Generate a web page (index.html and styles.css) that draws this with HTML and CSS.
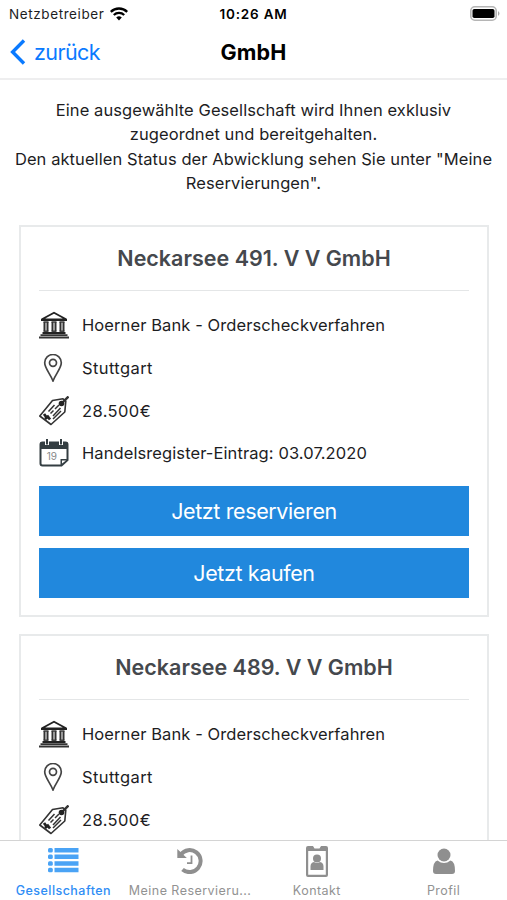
FILE: index.html
```html
<!DOCTYPE html>
<html lang="de">
<head>
  <meta charset="UTF-8" />
  <title>GmbH</title>
  <link rel="stylesheet" href="styles.css">
</head>
<body>
  <!-- shared icons -->
  <svg class="sprite" width="0" height="0">
    <symbol id="icon-bank" viewBox="0 0 30 28">
      <path d="M2.5 8.5 15 1.8l12.5 6.7z" fill="#fff" stroke="#222" stroke-width="1.8" />
      <path d="M2 9h26M3.5 22h23" stroke="#222" stroke-width="1.8" />
      <path d="M1.5 24.2h27M0 26.5h30" stroke="#333" stroke-width="1.8" />
      <path d="M4.5 11h5M12.500 11h5M20.500 11h5M4.500 20.200h5M12.500 20.200h5M20.500 20.200h5" stroke="#444" stroke-width="1.4" />
      <path d="M5.500 11v9M8.500 11v9M13.500 11v9M16.500 11v9M21.500 11v9M24.500 11v9" stroke="#333" stroke-width="2" />
    </symbol>
    <symbol id="icon-pin" viewBox="0 0 30 28">
      <path d="M14 27C11.5 20 5.7 14.3 5.7 8.8a8.3 8.3 0 0 1 16.6 0C22.300 14.300 16.500 20 14 27z" fill="none" stroke="#444" stroke-width="1.7" />
      <circle cx="14" cy="8.8" r="3.5" fill="none" stroke="#444" stroke-width="1.7" />
    </symbol>
    <symbol id="icon-tag" viewBox="0 0 30 30">
      <path d="M.8 20 13.500 4.500l10.500-1.700 2.800 2.300-1 10.900L12 28.500z" fill="#fff" stroke="#333" stroke-width="1.6" stroke-linejoin="round" />
      <path d="m22 8 7.500-7.500" stroke="#333" stroke-width="2.400" />
      <circle cx="22.500" cy="7.500" r="2.800" fill="#222" />
      <path d="m9.500 15.500 6-6.500M11.500 17.500l3-3M16 13l4-4M14 20l7.500-8M14 23l8-8" stroke="#333" stroke-width="1.500" />
      <path d="m5 18 3 4M8 19.500l3 4M6 23l4-3" stroke="#222" stroke-width="2.800" />
    </symbol>
    <symbol id="icon-calendar" viewBox="0 0 30 28">
      <path d="M1.500 5.500q0-2 2-2h23q2 0 2 2V21l-6 5.500h-19q-2 0-2-2z" fill="#fff" stroke="#343e42" stroke-width="2" />
      <path d="M1.500 3.500h27v6.500h-27zM21.500 27v-7h7z" fill="#343e42" />
      <path d="M23 24.500V21.500h4z" fill="#fff" />
      <path d="M8 0v6M22 0v6" stroke="#fff" stroke-width="4" />
      <path d="M8 0v5.500M22 0v5.500" stroke="#343e42" stroke-width="2" />
      <text x="12.800" y="20.500" text-anchor="middle" class="calendar-day">19</text>
    </symbol>
  </svg>

  <div class="app">
    <div class="status-bar">
      <div class="carrier">
        <span>Netzbetreiber</span>
        <svg width="18" height="14" viewBox="0 0 18 14" fill="none" stroke="#000" stroke-width="2.300">
          <path d="M.8 4.800a11.800 11.800 0 0 1 16.400 0" />
          <path d="M3.800 8a7.500 7.500 0 0 1 10.400 0" />
          <path d="m9 13.500-2.800-3a4 4 0 0 1 5.600 0z" fill="#000" stroke="none" />
        </svg>
      </div>
      <div class="clock">10:26 AM</div>
      <svg class="battery" width="31" height="15" viewBox="0 0 31 15">
        <rect x=".8" y=".8" width="25.400" height="13.400" rx="4" fill="#fff" stroke="#b5b5b5" stroke-width="1.600" />
        <rect x="2.500" y="3" width="22" height="9" rx="1.800" />
        <path d="M28 5q3 2.500 0 5z" fill="#aaa" />
      </svg>
    </div>

    <div class="nav-bar">
      <a class="back" href="#">
        <svg width="16" height="26" viewBox="0 0 16 26" fill="none" stroke="#0a7aff" stroke-width="3.400">
          <path d="M14 1.500 2.600 13 14 24.500" />
        </svg>
        <span>zurück</span>
      </a>
      <h1>GmbH</h1>
    </div>

    <div class="content">
      <p class="intro">
        Eine ausgewählte Gesellschaft wird Ihnen exklusiv<br>
        zugeordnet und bereitgehalten.<br>
        Den aktuellen Status der Abwicklung sehen Sie unter "Meine<br>
        Reservierungen".
      </p>

      <div class="card">
        <h2>Neckarsee 491. V V GmbH</h2>
        <ul class="details">
          <li><svg class="icon"><use href="#icon-bank" /></svg><span>Hoerner Bank - Orderscheckverfahren</span></li>
          <li><svg class="icon"><use href="#icon-pin" /></svg><span class="wide">Stuttgart</span></li>
          <li><svg class="icon tag"><use href="#icon-tag" /></svg><span class="wide">28.500€</span></li>
          <li><svg class="icon"><use href="#icon-calendar" /></svg><span>Handelsregister-Eintrag: 03.07.2020</span></li>
        </ul>
        <button>Jetzt reservieren</button>
        <button>Jetzt kaufen</button>
      </div>

      <div class="card">
        <h2>Neckarsee 489. V V GmbH</h2>
        <ul class="details">
          <li><svg class="icon"><use href="#icon-bank" /></svg><span>Hoerner Bank - Orderscheckverfahren</span></li>
          <li><svg class="icon"><use href="#icon-pin" /></svg><span class="wide">Stuttgart</span></li>
          <li><svg class="icon tag"><use href="#icon-tag" /></svg><span class="wide">28.500€</span></li>
        </ul>
      </div>
    </div>

    <div class="tab-bar">
      <a class="tab active" href="#">
        <svg width="32" height="28" viewBox="0 0 32 28" fill="#4aa3f5">
          <path d="M7.500 2h24v4.500h-24zM7.500 8.600h24v4.500h-24zM7.500 15.200h24v4.500h-24zM7.500 21.800h24v4.500h-24z" />
          <rect x="1" y="2" width="4.800" height="4.500" rx="1.500" />
          <rect x="1" y="8.600" width="4.800" height="4.500" rx="1.500" />
          <rect x="1" y="15.200" width="4.800" height="4.500" rx="1.500" />
          <rect x="1" y="21.800" width="4.800" height="4.500" rx="1.500" />
        </svg>
        <span>Gesellschaften</span>
      </a>
      <a class="tab" href="#">
        <svg width="28" height="28" viewBox="0 0 28 28" fill="none" stroke="#8f8f8f">
          <path d="M4.800 8.500A11 11 0 1 1 6.500 23.500" stroke-width="4" />
          <path d="M1.300 3v9h9.500z" fill="#8f8f8f" stroke="none" />
          <path d="M15.500 9.500v7.700H11" stroke-width="1.800" />
        </svg>
        <span>Meine Reservieru...</span>
      </a>
      <a class="tab" href="#">
        <svg width="24" height="32" viewBox="0 0 24 32" fill="#8f8f8f">
          <path fill-rule="evenodd" d="M3 0h5l1.500 2.500h5L16 0h5q2 0 2 2v27q0 2-2 2H3q-2 0-2-2V2q0-2 2-2zM3.200 5v23.800h17.600V5z" />
          <circle cx="12" cy="12.500" r="4" />
          <path d="M5.500 24v-3.500q0-4 3.500-4.500 3 2 6 0 3.500.5 3.500 4.500V24z" />
        </svg>
        <span>Kontakt</span>
      </a>
      <a class="tab" href="#">
        <svg width="24" height="28" viewBox="0 0 24 28" fill="#8f8f8f">
          <circle cx="12" cy="9" r="6.500" />
          <path d="M5.500 14.500q6.500 5 13 0Q23 15.500 23 25q0 3-3 3H4q-3 0-3-3 0-9.500 4.500-10.500z" />
        </svg>
        <span>Profil</span>
      </a>
    </div>
  </div>
</body>
</html>
```
FILE: styles.css
```css
* {
  box-sizing: border-box;
}

body {
  margin: 0;
  font-family: Inter, "Liberation Sans", sans-serif;
  background: #fff;
  color: #1d1d1f;
}

.sprite {
  display: none;
}

.app {
  display: flex;
  flex-direction: column;
  height: 900px;
  overflow: hidden;
}

.status-bar {
  display: grid;
  grid-template-columns: 1fr auto 1fr;
  align-items: center;
  height: 27px;
  padding: 0 6px 0 9px;
  flex-shrink: 0;
  font-size: 13.5px;
}

.carrier {
  display: flex;
  align-items: center;
  gap: 6px;
  letter-spacing: 0.6px;
}

.clock {
  font-weight: 600;
  color: #000;
  letter-spacing: 0.8px;
  margin-left: -3px;
}

.battery {
  justify-self: end;
}

.nav-bar {
  display: grid;
  grid-template-columns: 1fr auto 1fr;
  align-items: center;
  height: 53px;
  padding: 0 10px 2px;
  border-bottom: 2px solid #eeeeef;
  flex-shrink: 0;
}

.nav-bar h1 {
  margin: 0;
  font-size: 21.5px;
  font-weight: 700;
  letter-spacing: 0.2px;
  color: #000;
}

.back {
  display: flex;
  align-items: center;
  gap: 8px;
  color: #0a7aff;
  font-size: 21.5px;
  letter-spacing: -0.6px;
  text-decoration: none;
}

.content {
  flex: 1;
  min-height: 0;
  overflow: hidden;
  padding: 18px 18px 0 19px;
}

.intro {
  margin: 0 -10px 29px -11px;
  text-align: center;
  white-space: nowrap;
  font-size: 16.5px;
  line-height: 24.4px;
  letter-spacing: 0.08px;
}

.card {
  height: 392px;
  margin-bottom: 17px;
  padding: 0 18px;
  border: 2px solid #e8eaeb;
}

.card h2 {
  margin: 0;
  height: 64px;
  border-bottom: 1px solid #e4e6e7;
  text-align: center;
  font-size: 21.5px;
  font-weight: 600;
  line-height: 63px;
  color: #45484d;
}

.details {
  list-style: none;
  margin: 0;
  padding: 13px 0 11px;
}

.details li {
  display: flex;
  align-items: center;
  gap: 13px;
  height: 42.8px;
  font-size: 16.5px;
  letter-spacing: 0.09px;
}

.details .wide {
  letter-spacing: 0.4px;
}

.icon {
  width: 30px;
  height: 28px;
}

.icon.tag {
  height: 30px;
}

.calendar-day {
  font-size: 10px;
  letter-spacing: 0;
  fill: #888;
}

.card button {
  display: block;
  width: 100%;
  height: 50px;
  margin-bottom: 12px;
  border: none;
  background: #2188dd;
  color: #fff;
  font-family: inherit;
  font-size: 21.5px;
  letter-spacing: -0.38px;
}

.tab-bar {
  display: grid;
  grid-template-columns: repeat(4, 1fr);
  height: 60px;
  border-top: 1px solid #d4d4d4;
  flex-shrink: 0;
}

.tab {
  display: flex;
  flex-direction: column;
  align-items: center;
  justify-content: space-between;
  padding: 5px 0 2px;
  color: #929292;
  font-size: 12.5px;
  letter-spacing: 0.45px;
  text-decoration: none;
  white-space: nowrap;
}

.tab.active {
  color: #2f8df5;
  font-weight: 500;
}
```
